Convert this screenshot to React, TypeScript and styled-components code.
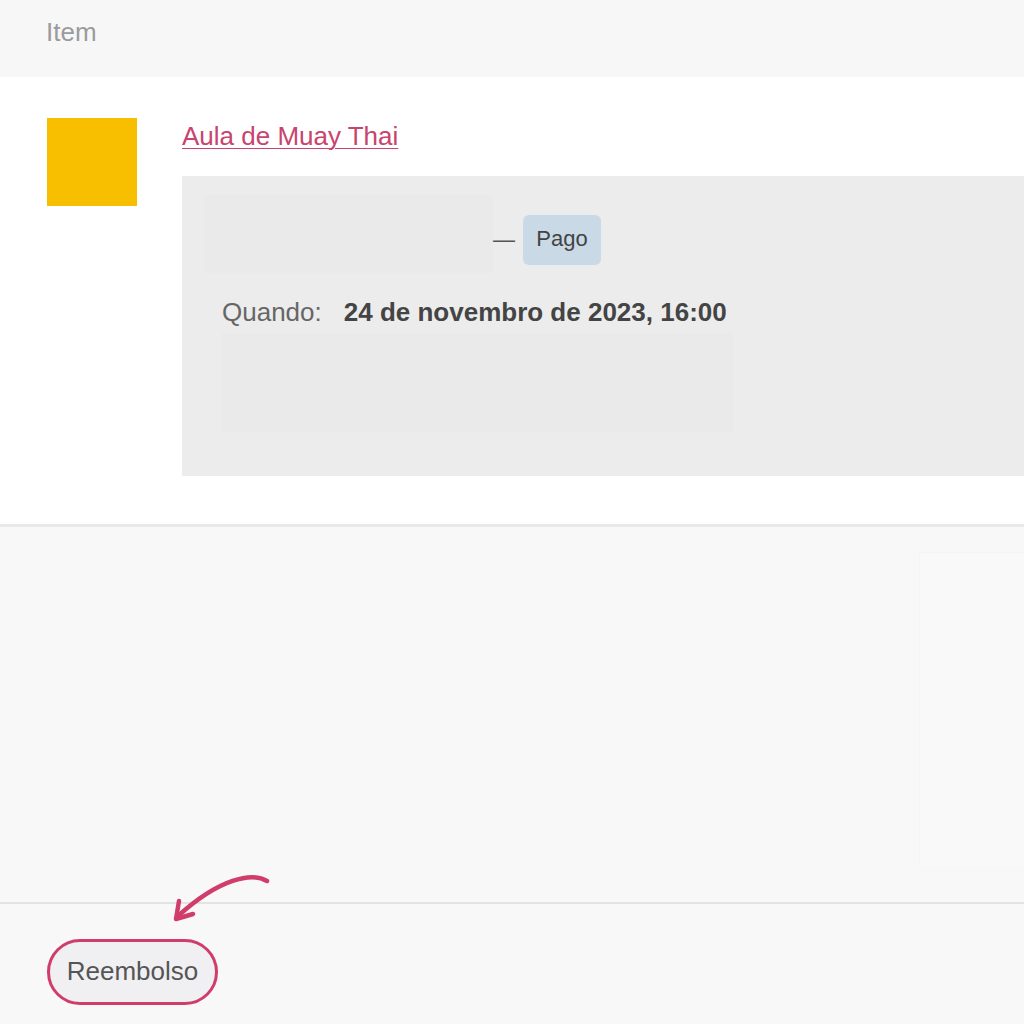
import React from 'react'
import styled, { createGlobalStyle } from 'styled-components'

const GlobalStyle = createGlobalStyle`
    body {
        margin: 0;
        background: #f8f8f8;
        font-family: 'Liberation Sans', Arial, sans-serif;
        overflow: hidden;
    }
`

const Page = styled.div`
    width: 1024px;
    height: 1024px;
    display: flex;
    flex-direction: column;
    background: #f8f8f8;
`

const TableHead = styled.div`
    height: 77px;
    box-sizing: border-box;
    padding: 17px 0 0 46px;
    background: #f7f7f7;
    color: #9b9b9b;
    font-size: 26px;
    line-height: 30px;
`

const ItemRow = styled.div`
    display: flex;
    align-items: flex-start;
    column-gap: 45px;
    padding: 41px 0 48px 47px;
    background: #ffffff;
    border-bottom: 3px solid #e9e9e9;
`

const Thumb = styled.div`
    width: 90px;
    height: 88px;
    flex-shrink: 0;
    background: #f8bf00;
`

const ItemDetails = styled.div`
    flex: 1;
    display: flex;
    flex-direction: column;
    row-gap: 25px;
`

const ItemLink = styled.a`
    margin-top: 3px;
    color: #c8436e;
    font-size: 26px;
    line-height: 30px;
    text-decoration: underline;
    text-underline-offset: 3px;
    text-decoration-thickness: 1px;
    cursor: pointer;
`

const MetaBox = styled.div`
    height: 300px;
    box-sizing: border-box;
    padding: 19px 0 0 22px;
    background: #ececec;
    display: flex;
    flex-direction: column;
`

const StatusRow = styled.div`
    display: flex;
    align-items: flex-start;
`

const Placeholder = styled.div<{ w: number; h: number }>`
    width: ${p => p.w}px;
    height: ${p => p.h}px;
    background: #eaeaea;
`

const StatusGroup = styled.div`
    display: flex;
    align-items: center;
    column-gap: 8px;
    margin-top: 20px;
`

const Dash = styled.span`
    color: #555;
    font-size: 22px;
`

const Badge = styled.span`
    width: 78px;
    height: 50px;
    box-sizing: border-box;
    border-radius: 6px;
    background: #c9d9e6;
    color: #444;
    font-size: 22px;
    display: flex;
    justify-content: center;
    align-items: center;
    padding-bottom: 2px;
`

const WhenLine = styled.div`
    margin: 24px 0 6px 18px;
    font-size: 26px;
    line-height: 30px;
    display: flex;
    column-gap: 22px;
`

const WhenLabel = styled.span`
    color: #666;
`

const WhenValue = styled.strong`
    color: #444;
`

const NoteBlock = styled(Placeholder)`
    margin-left: 18px;
`

const Body = styled.div`
    height: 375px;
    display: flex;
    justify-content: flex-end;
    align-items: flex-start;
    border-bottom: 2px solid #e3e3e3;
`

const SidePanel = styled.div`
    width: 104px;
    height: 313px;
    margin-top: 25px;
    background: #f9f9f9;
    border-left: 1px solid #f4f4f4;
    border-top: 1px solid #f4f4f4;
`

const Footer = styled.div`
    position: relative;
    padding: 35px 0 0 47px;
`

const RefundButton = styled.button`
    width: 171px;
    height: 66px;
    border: 3px solid #d13d6b;
    border-radius: 33px;
    background: #f0f0f2;
    color: #555;
    font-family: 'Liberation Sans', Arial, sans-serif;
    font-size: 26px;
    padding: 0 0 2px 0;
    cursor: pointer;
`

const Pointer = styled.svg`
    position: absolute;
    left: 160px;
    top: -36px;
    overflow: visible;
`

export default function App() {
    return (
        <Page>
            <GlobalStyle />
            <TableHead>Item</TableHead>
            <ItemRow>
                <Thumb />
                <ItemDetails>
                    <ItemLink>Aula de Muay Thai</ItemLink>
                    <MetaBox>
                        <StatusRow>
                            <Placeholder w={289} h={78} />
                            <StatusGroup>
                                <Dash>—</Dash>
                                <Badge>Pago</Badge>
                            </StatusGroup>
                        </StatusRow>
                        <WhenLine>
                            <WhenLabel>Quando:</WhenLabel>
                            <WhenValue>24 de novembro de 2023, 16:00</WhenValue>
                        </WhenLine>
                        <NoteBlock w={511} h={99} />
                    </MetaBox>
                </ItemDetails>
            </ItemRow>
            <Body>
                <SidePanel />
            </Body>
            <Footer>
                <Pointer width="120" height="60" viewBox="0 0 120 60">
                    {/* curved pointer down to the refund button */}
                    <path
                        d="M107 13 C 92 4, 60 10, 18 48"
                        fill="none"
                        stroke="#d13d6b"
                        strokeWidth="4.5"
                        strokeLinecap="round"
                    />
                    <path
                        d="M19 33 L 16 51 L 33 46"
                        fill="none"
                        stroke="#d13d6b"
                        strokeWidth="4.5"
                        strokeLinecap="round"
                        strokeLinejoin="round"
                    />
                </Pointer>
                <RefundButton>Reembolso</RefundButton>
            </Footer>
        </Page>
    )
}
